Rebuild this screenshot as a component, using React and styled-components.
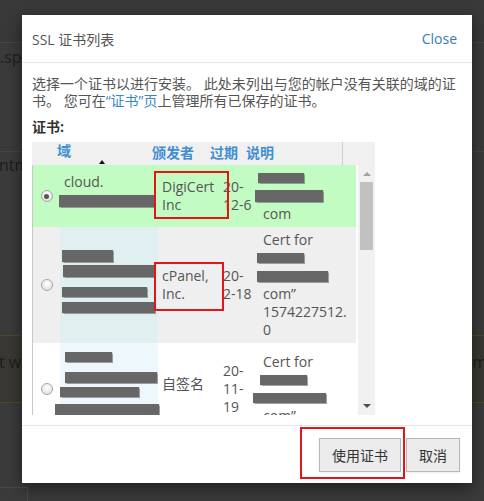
import React from "react";
import styled, { createGlobalStyle } from "styled-components";

const Global = createGlobalStyle`
  html, body { margin: 0; padding: 0; }
  body {
    background: #3b3b3b;
    font-family: "Open Sans", "Noto Sans CJK SC", sans-serif;
  }
  * { box-sizing: border-box; }
`;

/* ---------- dimmed page behind the dialog ---------- */
const Page = styled.div`
  position: relative;
  width: 484px;
  height: 501px;
  overflow: hidden;
  background: #3b3b3b;
  display: flex;
  flex-direction: column;
  font-size: 16px;
  color: #1e1e1e;
  white-space: nowrap;
`;
const PageTop = styled.div`
  height: 43px;
  background: #393939;
  border-bottom: 1px solid #464646;
`;
const PageRow = styled.div`
  height: ${(p) => p.$h}px;
  padding-top: ${(p) => p.$pt}px;
  line-height: 22px;
  display: flex;
  justify-content: space-between;
  background: ${(p) => p.$bg || "transparent"};
  border-bottom: 1px solid ${(p) => p.$line || "transparent"};
  border-top: 1px solid ${(p) => p.$topLine || "transparent"};
`;
const PageText = styled.span`
  margin-left: ${(p) => p.$ml || 0}px;
  margin-right: ${(p) => p.$mr || 0}px;
`;
const PageTab = styled.div`
  margin-top: auto;
  width: 28px;
  height: 14px;
  border: 1px solid #4a4a4a;
  border-bottom: none;
  border-left: none;
`;

/* ---------- dialog ---------- */
const Modal = styled.div`
  position: absolute;
  left: 22px;
  top: 15px;
  width: 450px;
  background: #fff;
  box-shadow: 0 5px 15px rgba(0, 0, 0, 0.5);
  color: #555;
  font-size: 14px;
  white-space: normal;
`;
const Header = styled.div`
  height: 48px;
  border-bottom: 1px solid #e5e5e5;
  display: flex;
  align-items: center;
  justify-content: space-between;
  padding: 0 15px 0 10px;
`;
const Title = styled.div`
  font-size: 14px;
  color: #555;
`;
const CloseLink = styled.a`
  font-size: 14px;
  color: #3a7ab5;
  cursor: pointer;
`;
const Body = styled.div`
  padding: 12px 12px 10px 10px;
`;
const Desc = styled.p`
  margin: 0;
  line-height: 17px;
  color: #555;
`;
const Link = styled.a`
  color: #3a87c8;
`;
const FieldLabel = styled.div`
  margin-top: 9px;
  line-height: 18px;
  font-weight: 700;
  color: #333;
`;

const Table = styled.div`
  margin-top: 6px;
  width: 343px;
`;
const TableHead = styled.div`
  height: 23px;
  background: #f0f0f0;
  display: flex;
`;
const HeadMain = styled.div`
  width: 310px;
  display: flex;
  padding-left: 25px;
`;
const HeadSide = styled.div`
  flex: 1;
  border-left: 1px solid #cdcdcd;
`;
const Th = styled.div`
  width: ${(p) => (p.$w ? `${p.$w}px` : "auto")};
  flex: ${(p) => (p.$w ? "none" : 1)};
  padding-top: ${(p) => p.$pt || 0}px;
  display: flex;
  flex-direction: column;
  font-weight: 700;
  font-size: 14px;
  line-height: 18px;
  color: #3f8fd2;
`;
const SortArrow = styled.span`
  margin-left: 42px;
  width: 0;
  height: 0;
  border-left: 3px solid transparent;
  border-right: 3px solid transparent;
  border-bottom: 4px solid #111;
`;

const ScrollArea = styled.div`
  height: 250px;
  display: flex;
`;
const List = styled.div`
  width: 324px;
  border-left: 1px solid #c8c8c8;
  overflow: hidden;
`;
const Scrollbar = styled.div`
  width: 17px;
  margin-left: 2px;
  background: #f1f1f1;
  display: flex;
  flex-direction: column;
  align-items: center;
`;
const ArrowUp = styled.span`
  margin-top: 7px;
  border-left: 4px solid transparent;
  border-right: 4px solid transparent;
  border-bottom: 4px solid #a3a3a3;
`;
const Thumb = styled.div`
  margin-top: 6px;
  width: 13px;
  height: 68px;
  background: #c1c1c1;
`;
const ArrowDown = styled.span`
  margin-top: auto;
  margin-bottom: 7px;
  border-left: 4px solid transparent;
  border-right: 4px solid transparent;
  border-top: 4px solid #505050;
`;

const Row = styled.div`
  display: grid;
  grid-template-columns: 27px 98px 62px 38px 98px;
  align-items: center;
  min-height: ${(p) => p.$h}px;
  background: ${(p) => p.$bg};
  font-size: 14px;
  line-height: 18px;
  color: #555;
  white-space: nowrap;
`;
const RadioCell = styled.div`
  display: flex;
  justify-content: center;
`;
const Radio = styled.span`
  width: 12px;
  height: 12px;
  border-radius: 50%;
  border: 1px solid #a6a6a6;
  background: radial-gradient(circle at 50% 35%, #ffffff 0%, #e6e6e6 70%, #d6d6d6 100%);
  display: grid;
  place-items: center;
  &::after {
    content: "";
    width: ${(p) => (p.$checked ? 5 : 0)}px;
    height: ${(p) => (p.$checked ? 5 : 0)}px;
    border-radius: 50%;
    background: #555;
  }
`;
const DomainCell = styled.div`
  align-self: stretch;
  background: ${(p) => p.$tint || "transparent"};
  padding-top: ${(p) => p.$pt}px;
  display: flex;
  flex-direction: column;
  align-items: flex-start;
`;
const CellText = styled.div`
  padding-left: ${(p) => p.$pl || 0}px;
`;
const IssuerCell = styled.div`
  position: relative;
  padding-left: 4px;
  margin-bottom: ${(p) => p.$mb || 0}px;
`;
const ExpiryCell = styled.div`
  padding-left: 3px;
`;
const DescCell = styled.div`
  display: flex;
  flex-direction: column;
  align-items: flex-start;
`;
const Redact = styled.span`
  display: block;
  flex: none;
  width: ${(p) => p.$w}px;
  height: ${(p) => p.$h}px;
  margin-left: ${(p) => p.$ml || 0}px;
  margin-top: ${(p) => p.$mt || 0}px;
  background: #676767;
  box-shadow: 0 0 1px 0.5px rgba(100, 100, 100, 0.6);
`;
const RedactLine = styled.div`
  height: 18px;
  display: flex;
  align-items: center;
`;
const Mark = styled.span`
  position: absolute;
  left: ${(p) => p.$l}px;
  top: ${(p) => p.$t}px;
  width: ${(p) => p.$w}px;
  height: ${(p) => p.$h}px;
  border: 2px solid #e5141b;
  pointer-events: none;
`;

const Footer = styled.div`
  border-top: 1px solid #e5e5e5;
  padding: 12px 12px 11px;
  display: flex;
  justify-content: flex-end;
  gap: 5px;
`;
const Button = styled.button`
  position: relative;
  height: 34px;
  padding: 0 12px;
  border: 1px solid #b8b8b8;
  border-radius: 0;
  background: #ebebeb;
  color: #333;
  font-family: "Open Sans", "Noto Sans CJK SC", sans-serif;
  font-size: 14px;
  box-shadow: 0 1px 2px rgba(0, 0, 0, 0.08);
`;

const Bars = ({ items }) =>
  items.map((b, i) => <Redact key={i} $w={b[0]} $h={b[1]} $ml={b[2]} $mt={b[3]} />);

export default function App() {
  return (
    <>
      <Global />
      <Page>
        <PageTop />
        <PageRow $h={109} $pt={2} $line="#454545">
          <PageText>.spidcltd.com</PageText>
        </PageRow>
        <PageRow $h={183} $pt={1}>
          <PageText $ml={-1}>ntml</PageText>
        </PageRow>
        <PageRow $h={68} $pt={15} $bg="#3a3833" $topLine="#524a1c" $line="#524a1c">
          <PageText $ml={-1}>t we</PageText>
          <PageText $mr={-3}>m</PageText>
        </PageRow>
        <PageTab />

        <Modal>
          <Header>
            <Title>SSL 证书列表</Title>
            <CloseLink>Close</CloseLink>
          </Header>
          <Body>
            <Desc>
              选择一个证书以进行安装。 此处未列出与您的帐户没有关联的域的证书。 您可在
              <Link>“证书”页</Link>上管理所有已保存的证书。
            </Desc>
            <FieldLabel>证书:</FieldLabel>
            <Table>
              <TableHead>
                <HeadMain>
                  <Th $w={95}>
                    域
                    <SortArrow />
                  </Th>
                  <Th $w={58} $pt={2}>颁发者</Th>
                  <Th $w={36} $pt={2}>过期</Th>
                  <Th $pt={2}>说明</Th>
                </HeadMain>
                <HeadSide />
              </TableHead>
              <ScrollArea>
                <List>
                  <Row $h={62} $bg="#c3fcc3">
                    <RadioCell>
                      <Radio $checked />
                    </RadioCell>
                    <DomainCell $pt={8}>
                      <CellText $pl={4}>cloud.</CellText>
                      <Bars items={[[96, 12, -1, 4]]} />
                    </DomainCell>
                    <IssuerCell>
                      DigiCert
                      <br />
                      Inc
                      <Mark $l={-4} $t={-7} $w={75} $h={48} />
                    </IssuerCell>
                    <ExpiryCell>
                      20-
                      <br />
                      12-6
                    </ExpiryCell>
                    <DescCell>
                      <RedactLine>
                        <Redact $w={46} $h={10} $ml={0} />
                      </RedactLine>
                      <RedactLine>
                        <Redact $w={68} $h={12} $ml={-3} />
                      </RedactLine>
                      <CellText $pl={5}>com</CellText>
                    </DescCell>
                  </Row>

                  <Row $h={116} $bg="#efefef">
                    <RadioCell>
                      <Radio />
                    </RadioCell>
                    <DomainCell $pt={23} $tint="#e0efef">
                      <Bars
                        items={[
                          [51, 12, 2, 0],
                          [92, 12, 3, 3],
                          [85, 10, 2, 10],
                          [93, 11, 2, 5],
                        ]}
                      />
                    </DomainCell>
                    <IssuerCell>
                      cPanel,
                      <br />
                      Inc.
                      <Mark $l={-4} $t={-5} $w={70} $h={49} />
                    </IssuerCell>
                    <ExpiryCell>
                      20-
                      <br />
                      2-18
                    </ExpiryCell>
                    <DescCell>
                      <CellText $pl={5}>Cert for</CellText>
                      <RedactLine>
                        <Redact $w={47} $h={10} $ml={-1} />
                      </RedactLine>
                      <RedactLine>
                        <Redact $w={71} $h={11} $ml={-1} />
                      </RedactLine>
                      <CellText $pl={5}>com”</CellText>
                      <CellText $pl={5}>1574227512.</CellText>
                      <CellText $pl={5}>0</CellText>
                    </DescCell>
                  </Row>

                  <Row $h={92} $bg="#ffffff">
                    <RadioCell>
                      <Radio />
                    </RadioCell>
                    <DomainCell $pt={9} $tint="#eef8fc">
                      <Bars
                        items={[
                          [47, 10, 5, 0],
                          [92, 11, 5, 10],
                          [79, 10, 0, 4],
                          [104, 11, -5, 7],
                        ]}
                      />
                    </DomainCell>
                    <IssuerCell $mb={10}>自签名</IssuerCell>
                    <ExpiryCell>
                      20-
                      <br />
                      11-
                      <br />
                      19
                    </ExpiryCell>
                    <DescCell>
                      <CellText $pl={5}>Cert for</CellText>
                      <RedactLine>
                        <Redact $w={47} $h={10} $ml={2} />
                      </RedactLine>
                      <RedactLine>
                        <Redact $w={73} $h={10} $ml={-5} />
                      </RedactLine>
                      <CellText $pl={5}>com”</CellText>
                    </DescCell>
                  </Row>
                </List>
                <Scrollbar>
                  <ArrowUp />
                  <Thumb />
                  <ArrowDown />
                </Scrollbar>
              </ScrollArea>
            </Table>
          </Body>
          <Footer>
            <Button>
              使用证书
              <Mark $l={-20} $t={-12} $w={105} $h={52} />
            </Button>
            <Button>取消</Button>
          </Footer>
        </Modal>
      </Page>
    </>
  );
}
